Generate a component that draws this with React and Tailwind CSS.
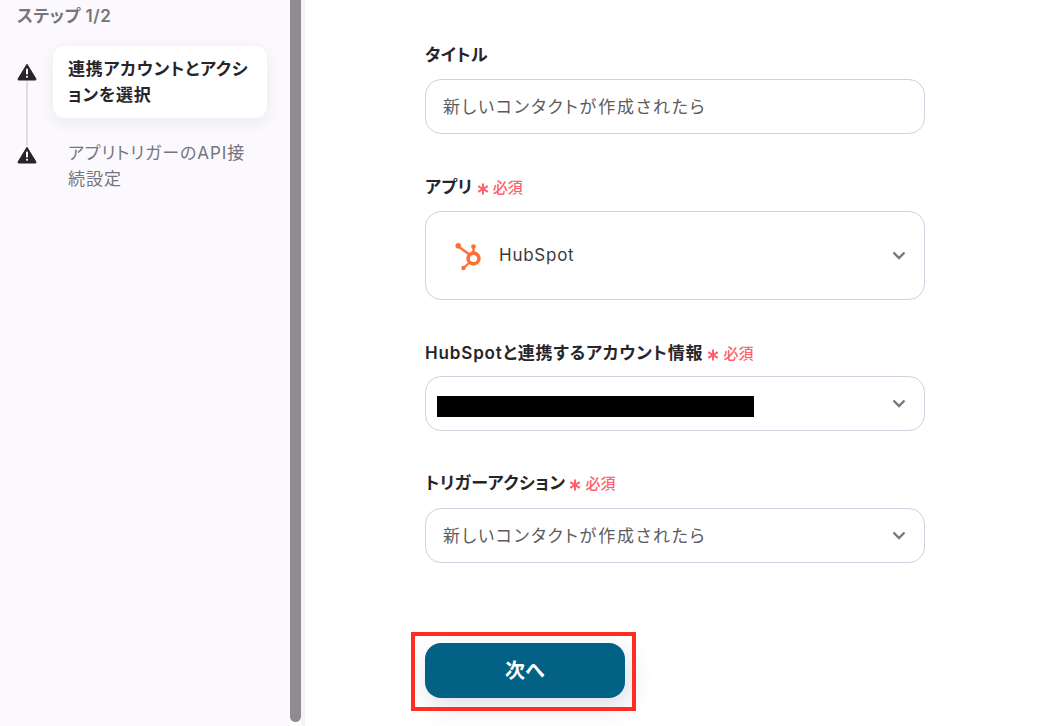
import React from 'react';

const font = "font-['Inter','Noto_Sans_CJK_JP',sans-serif]";

function WarningIcon() {
  return (
    <svg width="20" height="18" viewBox="0 0 20 18" className="block">
      <path d="M10 1.2 L19 16 Q19.3 17 18.2 17 L1.8 17 Q0.7 17 1 16 Z" fill="#27252a" stroke="#27252a" strokeWidth="1" strokeLinejoin="round" />
      <rect x="9" y="5.5" width="2" height="6" rx="0.8" fill="#fff" />
      <rect x="9" y="12.8" width="2" height="2" rx="0.8" fill="#fff" />
    </svg>
  );
}

function HubSpotIcon() {
  return (
    <svg width="30" height="30" viewBox="0 0 30 30" fill="none" className="block">
      <circle cx="19.5" cy="17.5" r="5.4" stroke="#ff6f35" strokeWidth="3.6" />
      <path d="M19.5 12 V6" stroke="#ff6f35" strokeWidth="2.4" />
      <circle cx="19.5" cy="5.6" r="2.4" fill="#ff6f35" />
      <path d="M15.5 13.5 L5 6" stroke="#ff6f35" strokeWidth="2.4" />
      <circle cx="4.2" cy="4.8" r="2.8" fill="#ff6f35" />
      <path d="M15.5 21.5 L10 26.5" stroke="#ff6f35" strokeWidth="2.2" />
      <circle cx="9.5" cy="27" r="2.2" fill="#ff6f35" />
    </svg>
  );
}

function Chevron() {
  return (
    <svg width="14" height="9" viewBox="0 0 14 9" fill="none" className="block">
      <path d="M1.5 1.5 L7 7 L12.5 1.5" stroke="#77777c" strokeWidth="2.4" />
    </svg>
  );
}

function Asterisk() {
  return (
    <svg width="12" height="12" viewBox="0 0 12 12" fill="none" className="block" stroke="#ff5f6b" strokeWidth="2">
      <path d="M6 0.5 V11.5" />
      <path d="M1.2 3.2 L10.8 8.8" />
      <path d="M10.8 3.2 L1.2 8.8" />
    </svg>
  );
}

function Label({ children, required, className }) {
  return (
    <div className={`flex items-center h-6 pt-[2px] font-semibold text-[17px] [font-feature-settings:'palt'] text-[#27252a] ${className}`}>
      {children}
      {required && (
        <span className="ml-[4px] mt-[2px] flex items-center text-[15px] font-medium tracking-normal text-[#ff5f6b]">
          <Asterisk />
          <span className="ml-[4px] -mt-[2px]">必須</span>
        </span>
      )}
    </div>
  );
}

function Field({ children, className, select }) {
  return (
    <div className={`flex items-center justify-between rounded-2xl border border-[#ced1de] bg-white pr-[18px] text-[17px] [font-feature-settings:'palt'] text-[#5d5b60] ${className}`}>
      <div className="flex items-center">{children}</div>
      {select && <Chevron />}
    </div>
  );
}

export default function App() {
  return (
    <div className={`flex h-[726px] w-[1053px] overflow-hidden bg-white ${font}`}>
      <aside className="w-[290px] shrink-0 bg-[#fbf9fd] pl-[17px] pt-[5px]">
        <div className="h-[22px] text-[17px] font-semibold leading-[22px] tracking-[0.5px] text-[#77747b] [font-feature-settings:'palt']">ステップ 1/2</div>
        <div className="mt-[19px] flex">
          <div className="flex w-[19px] shrink-0 flex-col items-center pt-[17px]">
            <WarningIcon />
            <div className="h-[65px] w-[2px] bg-[#dfdde1]" />
            <WarningIcon />
          </div>
          <div className="ml-[17px] flex w-[214px] flex-col">
            <div className="h-[72px] rounded-xl bg-white px-[15px] py-[10px] text-[17px] font-semibold leading-[26px] tracking-[0.8px] [font-feature-settings:'palt'] [line-break:anywhere] text-[#27252a] shadow-[0_4px_16px_rgba(60,50,90,0.08)]">
              連携アカウントとアクションを選択
            </div>
            <div className="mt-[22px] px-[15px] text-[17px] leading-[26px] tracking-[0.95px] [font-feature-settings:'palt'] text-[#77747b]">
              アプリトリガーのAPI接続設定
            </div>
          </div>
        </div>
      </aside>
      <div className="h-[722px] w-[11px] shrink-0 rounded-b-md bg-[#8f8c91]" />
      <div className="w-[4px] shrink-0 bg-[#f6f3f8]" />
      <main className="relative flex-1 pl-[120px] pt-[43px]">
        <div className="flex w-[500px] flex-col">
          <Label><span className="tracking-[0.3px]">タイトル</span></Label>
          <Field className="mt-3 h-[55px] pl-[17px]"><span className="pt-[3px] tracking-[1.85px]">新しいコンタクトが作成されたら</span></Field>
          <Label required className="mt-[41px]"><span className="tracking-[0.5px]">アプリ</span></Label>
          <Field select className="mt-3 h-[89px] pl-[28px]">
            <HubSpotIcon />
            <span className="ml-[15px] tracking-[0.75px] text-[#3a3a40]">HubSpot</span>
          </Field>
          <Label required className="mt-[41px]"><span className="tracking-[0.85px]">HubSpotと連携するアカウント情報</span></Label>
          <Field select className="mt-[11px] h-[55px] pl-[11px]">
            <div className="mt-[6px] h-[21px] w-[317px] bg-black" />
          </Field>
          <Label required className="mt-[40px]"><span className="tracking-[0.5px]">トリガーアクション</span></Label>
          <Field select className="mt-[13px] h-[55px] pl-[17px]"><span className="pt-[3px] tracking-[1.85px]">新しいコンタクトが作成されたら</span></Field>
          <button className="mt-20 h-[55px] w-[200px] rounded-2xl bg-[#036186] text-xl font-bold text-white shadow-[4px_8px_24px_rgba(60,70,120,0.18)]">
            次へ
          </button>
        </div>
        <div className="pointer-events-none absolute left-[106px] top-[632px] h-[79px] w-[225px] border-4 border-[#ff2d26]" />
      </main>
    </div>
  );
}
